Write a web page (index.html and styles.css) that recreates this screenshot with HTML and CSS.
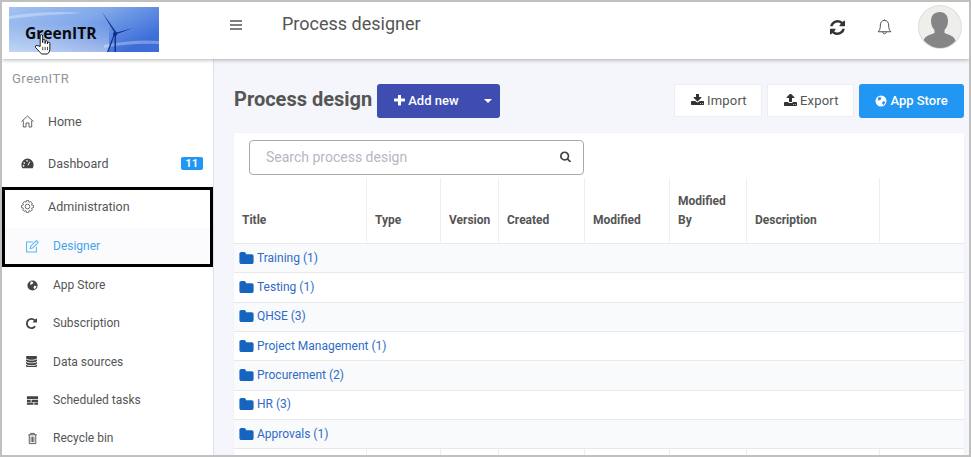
FILE: index.html
```html
<!DOCTYPE html>
<html lang="en">
<head>
<meta charset="utf-8">
<title>Process designer</title>
<link rel="stylesheet" href="styles.css">
</head>
<body>
<svg class="sprite" aria-hidden="true">
  <symbol id="folder" viewBox="64 128 1664 1408"><path d="M1728 608v704q0 92-66 158t-158 66h-1216q-92 0-158-66t-66-158v-960q0-92 66-158t158-66h320q92 0 158 66t66 158v32h672q92 0 158 66t66 158z"/></symbol>
</svg>
<div class="frame">
  <header class="topbar">
    <div class="logo">
      <svg class="logo-art" viewBox="0 0 150 45" aria-hidden="true">
        <defs>
          <linearGradient id="sky" x1="0" y1="0" x2="1" y2="0.600">
            <stop offset="0" stop-color="#a4c2f0"/>
            <stop offset=".5" stop-color="#80a8ea"/>
            <stop offset="1" stop-color="#3d6ed8"/>
          </linearGradient>
          <linearGradient id="glow" x1="0" y1="0" x2="0" y2="1">
            <stop offset="0" stop-color="#fff" stop-opacity="0"/>
            <stop offset="1" stop-color="#fff" stop-opacity=".5"/>
          </linearGradient>
        </defs>
        <rect width="150" height="45" fill="url(#sky)"/>
        <rect y="16" width="100" height="29" fill="url(#glow)"/>
        <path d="M0 9 Q40 3 75 6 L40 8 Q15 10 0 12Z" fill="#fff" opacity=".3"/>
        <path d="M95 38 Q125 32 150 34 L150 37 Q120 36 95 41Z" fill="#fff" opacity=".3"/>
        <path d="M98 45 L104.500 28 L105.500 28.500 L99.500 45Z M105.500 27 h1.500 V45 h-1.500Z" fill="#12308c"/>
        <path d="M106 26.500 L93 5 L107.500 25.500Z M106 26 L124 21 L106.500 27.500Z" fill="#12308c"/>
        <circle cx="106" cy="27" r="2" fill="#0b2a92"/>
      </svg>
      <span class="logo-text">GreenITR</span>
      <svg class="hand" viewBox="0 0 20 24" aria-hidden="true">
        <path d="M6.500 14 V3 a1.300 1.300 0 0 1 2.600 0 V10 V8 a1.300 1.300 0 0 1 2.600 0 V11 V9 a1.300 1.300 0 0 1 2.500 0 V11.500 V10.500 a1.300 1.300 0 0 1 2.500 0 V17 q0 3 -2.500 5 H8 Q6 20 3.500 17 L1.500 15 Q1 13 3 13 Z" fill="#fff" stroke="#111" stroke-width="1"/>
        <path d="M9.200 14.500 V18 M11.700 14.500 V18 M14.200 14.500 V18" stroke="#111" stroke-width=".8"/>
      </svg>
    </div>
    <button class="burger" type="button" aria-label="Menu">
      <svg viewBox="0 0 12 10" width="12" height="10"><path d="M0 1h12M0 5h12M0 9h12" stroke="#555" stroke-width="1.600"/></svg>
    </button>
    <h1 class="page-title">Process designer</h1>
    <div class="top-actions">
      <svg class="top-icon" viewBox="128 128 1536 1536" aria-hidden="true">
        <path fill="#333" d="M1639 1056q0 5-1 7-64 268-268 434.500t-478 166.500q-146 0-282.500-55t-243.500-157l-129 129q-19 19-45 19t-45-19-19-45v-448q0-26 19-45t45-19h448q26 0 45 19t19 45-19 45l-137 137q71 66 161 102t187 36q134 0 250-65t186-179q11-17 53-117 8-23 30-23h192q13 0 22.500 9.500t9.500 22.500zm25-800v448q0 26-19 45t-45 19h-448q-26 0-45-19t-19-45 19-45l138-138q-148-137-349-137-134 0-250 65t-186 179q-11 17-53 117-8 23-30 23h-199q-13 0-22.500-9.500t-9.500-22.500v-7q65-268 270-434.500t480-166.500q146 0 284 55.500t245 156.500l130-129q19-19 45-19t45 19 19 45z"/>
      </svg>
      <svg class="top-icon bell" viewBox="0 0 16 18" aria-hidden="true">
        <path d="M8 1.500 C5 1.500 3.600 3.800 3.600 6.500 C3.600 10.500 2.800 11.800 1.300 13.500 H14.700 C13.200 11.800 12.400 10.500 12.400 6.500 C12.400 3.800 11 1.500 8 1.500Z M6.200 13.700 C6.200 16.200 9.800 16.200 9.800 13.700 M8 1.500 V.5" fill="none" stroke="#444" stroke-width="1"/>
      </svg>
      <div class="avatar">
        <svg viewBox="0 0 42 42" aria-hidden="true">
          <path d="M21 6 c5 0 8 3.500 8 9 c0 4 -1.500 7 -3.500 9 v3 c5 2 10 3 11 8 A20 20 0 0 1 4.500 35 c1 -5 6 -6 11 -8 v-3 c-2 -2 -3.500 -5 -3.500 -9 c0 -5.500 3 -9 9 -9Z" fill="#858585"/>
        </svg>
      </div>
    </div>
  </header>
  <div class="body-row">
    <nav class="sidebar">
      <div class="brand">GreenITR</div>
      <a class="nav-item"><svg class="nav-icon" viewBox=".5 .5 13 13"><path d="M1 7 L7 1.500 L13 7 M2.800 6 V12.500 H5.500 V8.500 H8.500 V12.500 H11.200 V6" fill="none" stroke="#555" stroke-width=".9"/></svg><span>Home</span></a>
      <a class="nav-item"><svg class="nav-icon" viewBox="0 0 14 14"><path d="M7 1.500 A6.800 6.800 0 0 0 .5 8.500 C.5 10 1 11.500 1.500 12 H12.500 C13 11.500 13.500 10 13.500 8.500 A6.800 6.800 0 0 0 7 1.500Z" fill="#444"/><path d="M7.500 9 L9.500 5" stroke="#fff" stroke-width="1"/><circle cx="3.500" cy="6.500" r=".9" fill="#fff"/><circle cx="6.500" cy="4" r=".9" fill="#fff"/><circle cx="2.800" cy="9.500" r=".9" fill="#fff"/></svg><span>Dashboard</span><b class="badge">11</b></a>
      <div class="highlight">
        <a class="nav-item admin"><svg class="nav-icon" viewBox=".8 .8 12.400 12.400"><circle cx="7" cy="7" r="2.200" fill="none" stroke="#666" stroke-width=".9"/><path d="M6 1.200 H8 L8.400 3 L10 2.300 L11.600 3.800 L10.800 5.400 L12.700 6 V8 L10.900 8.500 L11.600 10.200 L10.200 11.600 L8.500 10.900 L8 12.800 H6 L5.500 10.900 L3.800 11.600 L2.400 10.200 L3.100 8.500 L1.300 8 V6 L3.200 5.400 L2.400 3.800 L4 2.300 L5.600 3Z" fill="none" stroke="#666" stroke-width=".9"/></svg><span>Administration</span></a>
        <a class="nav-item sub active"><svg class="nav-icon" viewBox="1 1 12.500 12.500"><path d="M11 7.500 V12.500 H1.500 V3 H7.500" fill="none" stroke="#5bb6ee" stroke-width="1"/><path d="M5 9.300 L5.500 7 L11 1.500 L12.800 3.300 L7.300 8.800Z" fill="none" stroke="#5bb6ee" stroke-width="1"/></svg><span>Designer</span></a>
      </div>
      <a class="nav-item sub"><svg class="nav-icon" viewBox="0 0 14 14"><circle cx="7" cy="7" r="5.500" fill="#444"/><path d="M5 2.500 L8 3.500 L7 5.500 L4.500 6.500Z M9 7 L11.500 8 L9.500 11 L8 9.500Z" fill="#fff"/></svg><span>App Store</span></a>
      <a class="nav-item sub"><svg class="nav-icon fa" viewBox="128 128 1536 1536"><path fill="#444" d="M1664 256v448q0 26-19 45t-45 19h-448q-42 0-59-40-17-39 14-69l138-138q-148-137-349-137-104 0-198.500 40.500t-163.500 109.500-109.500 163.500-40.500 198.500 40.500 198.500 109.500 163.500 163.500 109.500 198.500 40.500q119 0 225-52t179-147q7-10 23-12 15 0 25 9l137 138q9 8 9.500 20.500t-7.500 22.500q-109 132-264 204.500t-327 72.500q-156 0-298-61t-245-164-164-245-61-298 61-298 164-245 245-164 298-61q147 0 284.500 55.500t244.500 156.500l130-129q29-31 70-14 39 17 39 59z"/></svg><span>Subscription</span></a>
      <a class="nav-item sub"><svg class="nav-icon fa" viewBox="128 128 1536 1536"><path fill="#444" d="M896 768q237 0 443-43t325-127v170q0 69-103 128t-280 93.500-385 34.500-385-34.500-280-93.500-103-128v-170q119 84 325 127t443 43zm0 768q237 0 443-43t325-127v170q0 69-103 128t-280 93.500-385 34.500-385-34.500-280-93.500-103-128v-170q119 84 325 127t443 43zm0-384q237 0 443-43t325-127v170q0 69-103 128t-280 93.500-385 34.500-385-34.500-280-93.500-103-128v-170q119 84 325 127t443 43zm0-1152q208 0 385 34.500t280 93.500 103 128v128q0 69-103 128t-280 93.500-385 34.500-385-34.500-280-93.500-103-128v-128q0-69 103-128t280-93.500 385-34.500z"/></svg><span>Data sources</span></a>
      <a class="nav-item sub"><svg class="nav-icon" viewBox="0 0 14 14"><path d="M1 2.500 H13 V5.500 H1Z M1 6.200 H5 V8.500 H1Z M6 6.200 H13 V8.500 H6Z M1 9.200 H8 V11.500 H1Z M9 9.200 H13 V11.500 H9Z" fill="#444"/></svg><span>Scheduled tasks</span></a>
      <a class="nav-item sub"><svg class="nav-icon" viewBox="0 0 14 14"><path d="M2.500 3 H11.500 M5 3 V1.500 H9 V3 M3.500 3 V12.500 H10.500 V3 M5.500 5 V11 M7 5 V11 M8.500 5 V11" fill="none" stroke="#555" stroke-width="1"/></svg><span>Recycle bin</span></a>
    </nav>
    <main class="content">
      <div class="toolbar">
        <h2 class="heading">Process design</h2>
        <div class="split">
          <button class="btn-add" type="button"><svg class="btn-icon plus" viewBox="192 192 1408 1408"><path fill="#fff" d="M1600 736v192q0 40-28 68t-68 28h-416v416q0 40-28 68t-68 28h-192q-40 0-68-28t-28-68v-416h-416q-40 0-68-28t-28-68v-192q0-40 28-68t68-28h416v-416q0-40 28-68t68-28h192q40 0 68 28t28 68v416h416q40 0 68 28t28 68z"/></svg>Add new</button>
          <span class="caret"></span>
        </div>
        <div class="spacer"></div>
        <button class="btn-light" type="button"><svg class="btn-icon" viewBox="64 128 1664 1536"><path fill="#333" d="M1344 1344q0-26-19-45t-45-19-45 19-19 45 19 45 45 19 45-19 19-45zm256 0q0-26-19-45t-45-19-45 19-19 45 19 45 45 19 45-19 19-45zm128-224v320q0 40-28 68t-68 28h-1472q-40 0-68-28t-28-68v-320q0-40 28-68t68-28h465l135 136q58 56 136 56t136-56l136-136h464q40 0 68 28t28 68zm-325-569q17 41-14 70l-448 448q-18 19-45 19t-45-19l-448-448q-31-29-14-70 17-39 59-39h256v-448q0-26 19-45t45-19h256q26 0 45 19t19 45v448h256q42 0 59 39z"/></svg>Import</button>
        <button class="btn-light export" type="button"><svg class="btn-icon" viewBox="64 128 1664 1536"><path fill="#333" d="M1344 1472q0-26-19-45t-45-19-45 19-19 45 19 45 45 19 45-19 19-45zm256 0q0-26-19-45t-45-19-45 19-19 45 19 45 45 19 45-19 19-45zm128-224v320q0 40-28 68t-68 28h-1472q-40 0-68-28t-28-68v-320q0-40 28-68t68-28h427q21 56 70.500 92t110.500 36h256q61 0 110.500-36t70.500-92h427q40 0 68 28t28 68zm-325-648q-17 40-59 40h-256v448q0 26-19 45t-45 19h-256q-26 0-45-19t-19-45v-448h-256q-42 0-59-40-17-39 14-69l448-448q18-19 45-19t45 19l448 448q31 30 14 69z"/></svg>Export</button>
        <button class="btn-store" type="button"><svg class="btn-icon" viewBox="0 0 12 12"><circle cx="6" cy="6" r="5.500" fill="#fff"/><path d="M3.500 1.800 L6.500 2.800 L5.500 5 L2.800 5.500Z M8 6 L10.500 7 L8.500 10 L7 8.500Z" fill="#2196f3"/></svg>App Store</button>
      </div>
      <section class="card">
        <div class="search-wrap">
          <label class="search">
            <input class="search-input" type="text" placeholder="Search process design">
            <svg class="search-icon" viewBox="64 64 1664 1664"><path fill="#444" d="M1216 832q0-185-131.500-316.500t-316.500-131.500-316.500 131.500-131.500 316.500 131.500 316.500 316.500 131.500 316.500-131.500 131.500-316.500zm512 832q0 52-38 90t-90 38q-54 0-90-38l-343-342q-179 124-399 124-143 0-273.500-55.500t-225-150-150-225-55.500-273.500 55.500-273.500 150-225 225-150 273.500-55.500 273.500 55.500 225 150 150 225 55.500 273.500q0 220-124 399l343 343q37 37 37 90z"/></svg>
          </label>
        </div>
        <div class="grid-head">
          <div class="th">Title</div>
          <div class="th">Type</div>
          <div class="th">Version</div>
          <div class="th">Created</div>
          <div class="th">Modified</div>
          <div class="th">Modified<br>By</div>
          <div class="th">Description</div>
          <div class="th"></div>
        </div>
        <a class="folder"><svg class="folder-icon"><use href="#folder"/></svg>Training (1)</a>
        <a class="folder"><svg class="folder-icon"><use href="#folder"/></svg>Testing (1)</a>
        <a class="folder"><svg class="folder-icon"><use href="#folder"/></svg>QHSE (3)</a>
        <a class="folder"><svg class="folder-icon"><use href="#folder"/></svg>Project Management (1)</a>
        <a class="folder"><svg class="folder-icon"><use href="#folder"/></svg>Procurement (2)</a>
        <a class="folder"><svg class="folder-icon"><use href="#folder"/></svg>HR (3)</a>
        <a class="folder"><svg class="folder-icon"><use href="#folder"/></svg>Approvals (1)</a>
        <div class="grid-foot">
          <div class="tf"></div><div class="tf"></div><div class="tf"></div><div class="tf"></div><div class="tf"></div><div class="tf"></div><div class="tf"></div><div class="tf"></div>
        </div>
      </section>
    </main>
  </div>
</div>
</body>
</html>
```

FILE: styles.css
```css
* { box-sizing: border-box; }
html, body { margin: 0; padding: 0; height: 100%; }
body {
  font-family: Roboto, "Liberation Sans", sans-serif;
  font-size: 13px;
  color: #555;
  overflow: hidden;
}
.sprite { display: none; }
.frame {
  width: 971px;
  height: 457px;
  border: 2px solid #c0c0c0;
  display: flex;
  flex-direction: column;
  overflow: hidden;
  background: #f4f6fb;
}
.topbar {
  height: 57px;
  flex: none;
  background: #fff;
  display: flex;
  align-items: center;
  padding-left: 7px;
  box-shadow: 0 1px 4px rgba(0, 0, 0, .3);
  position: relative;
  z-index: 2;
}
.logo {
  position: relative;
  width: 150px;
  height: 45px;
  margin-top: -2px;
  flex: none;
}
.logo-art { display: block; width: 150px; height: 45px; }
.logo-text {
  position: absolute;
  left: 16px;
  top: 16px;
  font-family: "Open Sans", sans-serif;
  font-weight: 700;
  font-size: 15.6px;
  line-height: 20px;
  color: #0a0a0a;
}
.hand {
  position: absolute;
  left: 25px;
  top: 26px;
  width: 19px;
  height: 23px;
}
.burger {
  border: 0;
  background: none;
  padding: 0;
  margin: -12px 0 0 71px;
  width: 12px;
  height: 10px;
  display: flex;
}
.page-title {
  margin: -15px 0 0 40px;
  font-size: 18px;
  font-weight: 400;
  color: #555;
}
.top-actions {
  margin-left: auto;
  display: flex;
  align-items: center;
  margin-right: 8px;
}
.top-icon { width: 15px; height: 15px; display: block; margin-top: -7px; }
.bell { width: 17px; height: 17px; margin-left: 31px; }
.avatar {
  width: 42px;
  height: 42px;
  border-radius: 50%;
  margin-left: 26px;
  margin-top: -7px;
  background: #eeeeea;
  box-shadow: 0 0 0 1px #ddd;
  overflow: hidden;
}
.avatar svg { display: block; width: 42px; height: 42px; }
.body-row { flex: 1; display: flex; min-height: 0; }
.sidebar {
  width: 212px;
  flex: none;
  background: #fff;
  border-right: 1px solid #dfe1e6;
  padding-top: 11px;
}
.brand {
  font-size: 13px;
  letter-spacing: .5px;
  line-height: 18px;
  color: #8f959e;
  padding-left: 10px;
  margin-bottom: 12px;
}
.nav-item {
  display: flex;
  align-items: center;
  height: 42px;
  padding-left: 19px;
  font-size: 12.5px;
  color: #555;
}
.nav-icon { width: 13px; height: 13px; flex: none; margin-right: 14px; }
.fa { width: 11px; height: 11px; margin-right: 16px; }
.badge {
  margin-left: auto;
  margin-right: 10px;
  background: #2196f3;
  color: #fff;
  font-size: 10.5px;
  line-height: 13px;
  width: 22px;
  text-align: center;
  border-radius: 2px;
  letter-spacing: .5px;
}
.sub { padding-left: 24px; height: 38.3px; font-size: 12px; }
.highlight {
  border: 3px solid #000;
  height: 80px;
  width: 211px;
  margin: 3px 0 -1px;
  position: relative;
}
.highlight .nav-item { padding-left: 16px; }
.highlight .admin { height: 38px; padding-bottom: 6px; }
.highlight .sub { padding-left: 21px; height: 36px; }
.active { background: #fbfbfd; color: #42a5e8; }
.content {
  flex: 1;
  min-width: 0;
  padding: 25px 5px 0 20px;
  display: flex;
  flex-direction: column;
}
.toolbar { display: flex; align-items: flex-start; height: 34px; margin-bottom: 15px; flex: none; }
.heading { margin: 0 5px 0 0; font-size: 20px; font-weight: 700; line-height: 30px; color: #555; }
.split {
  width: 123px;
  height: 34px;
  background: #3f4db1;
  border-radius: 3px;
  display: flex;
  align-items: center;
}
.btn-add {
  border: 0;
  background: none;
  color: #fff;
  font: 500 13px Roboto, sans-serif;
  padding: 0 0 2px 17px;
  display: flex;
  align-items: center;
}
.btn-icon { width: 12px; height: 12px; margin-right: 3px; }
.plus { width: 11px; height: 11px; }
.caret {
  margin-left: auto;
  margin-right: 8px;
  border: 4px solid transparent;
  border-top-color: #fff;
  border-bottom-width: 0;
}
.spacer { flex: 1; }
.btn-light {
  height: 33px;
  width: 88px;
  padding: 0 0 1px 16px;
  background: #fff;
  border: 1px solid #eceef3;
  border-radius: 2px;
  color: #555;
  font: 400 13px Roboto, sans-serif;
  display: flex;
  align-items: center;
  margin-left: 5px;
  letter-spacing: .2px;
}
.btn-light .btn-icon { width: 13px; height: 12px; margin-right: 3px; }
.export { width: 87px; }
.btn-store {
  height: 34px;
  width: 105px;
  border: 0;
  border-radius: 3px;
  padding: 0 0 1px;
  background: #2196f3;
  color: #fff;
  font: 500 13px Roboto, sans-serif;
  margin-left: 5px;
  display: flex;
  align-items: center;
  justify-content: center;
}
.card {
  background: #fff;
  flex: none;
  border-radius: 2px 2px 0 0;
  box-shadow: 0 0 2px rgba(0, 0, 0, .05);
}
.search-wrap { padding: 7px 0 3px 15px; }
.search {
  display: flex;
  align-items: center;
  width: 335px;
  height: 35px;
  border: 1px solid #aaa;
  border-radius: 4px;
  padding: 0 12px 2px 16px;
}
.search-input {
  flex: 1;
  border: 0;
  outline: 0;
  padding: 0;
  font: 400 14px Roboto, sans-serif;
  color: #555;
  background: none;
}
.search-input::placeholder { color: #b5b8c2; opacity: 1; }
.search-icon { width: 11px; height: 11px; }
.grid-head, .grid-foot {
  display: grid;
  grid-template-columns: 133px 74px 58px 86px 85px 77px 133px 84px;
}
.grid-head { height: 66px; border-bottom: 1px solid #e8e9ed; }
.th {
  border-right: 1px solid #eeeff2;
  display: flex;
  align-items: flex-end;
  padding: 0 0 13px 8px;
  font-size: 12px;
  font-weight: 700;
  line-height: 19px;
  color: #555;
}
.th:last-child { border-right: 0; }
.folder {
  display: flex;
  align-items: center;
  height: 29.35px;
  padding: 0 0 1px 5px;
  border-bottom: 1px solid #e8e9ed;
  background: #fff;
  color: #2f6bc8;
  font-size: 12px;
}
.folder:nth-of-type(odd) { background: #f9fafc; }
.folder-icon { width: 15px; height: 12px; margin-right: 3px; fill: #1565c0; }
.grid-foot { height: 12px; }
.tf { border-right: 1px solid #eeeff2; }
.tf:last-child { border-right: 0; }
```
